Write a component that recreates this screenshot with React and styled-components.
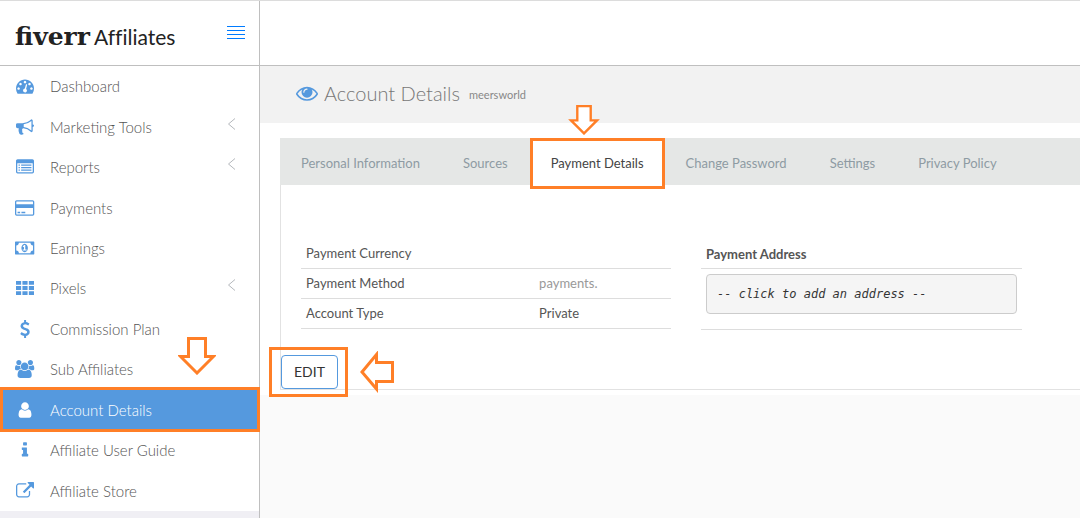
import styled, { createGlobalStyle } from "styled-components";

const icons = {
    dashboard: {
        width: 1792,
        path: "M384 1152q0-53-37.5-90.5t-90.5-37.5-90.5 37.5-37.5 90.5 37.5 90.5 90.5 37.5 90.5-37.5 37.5-90.5zm192-448q0-53-37.5-90.5t-90.5-37.5-90.5 37.5-37.5 90.5 37.5 90.5 90.5 37.5 90.5-37.5 37.5-90.5zm428 481l101-382q6-26-7.5-48.5t-38.5-29.5-48 6.5-30 39.5l-101 382q-60 5-107 43.5t-63 98.5q-20 77 20 146t117 89 146-20 89-117q16-60-6-117t-72-91zm660-33q0-53-37.5-90.5t-90.5-37.5-90.5 37.5-37.5 90.5 37.5 90.5 90.5 37.5 90.5-37.5 37.5-90.5zm-640-640q0-53-37.5-90.5t-90.5-37.5-90.5 37.5-37.5 90.5 37.5 90.5 90.5 37.5 90.5-37.5 37.5-90.5zm448 192q0-53-37.5-90.5t-90.5-37.5-90.5 37.5-37.5 90.5 37.5 90.5 90.5 37.5 90.5-37.5 37.5-90.5zm320 448q0 261-141 483-19 29-54 29h-1402q-35 0-54-29-141-221-141-483 0-182 71-348t191-286 286-191 348-71 348 71 286 191 191 286 71 348z",
    },
    bullhorn: {
        width: 1792,
        path: "M1664 640q53 0 90.5 37.5t37.5 90.5-37.5 90.5-90.5 37.5v384q0 52-38 90t-90 38q-417-347-812-380-58 19-91 66t-31 100.5 40 92.5q-20 33-23 65.5t6 58 33.5 55 48 50 61.5 50.5q-29 58-111.5 83t-168.5 11.5-132-55.5q-7-23-29.5-87.5t-32-94.5-23-89-15-101 3.5-98.5 22-110.5h-122q-66 0-113-47t-47-113v-192q0-66 47-113t113-47h480q435 0 896-384 52 0 90 38t38 90v384zm-128 604v-954q-394 302-768 343v270q377 42 768 341z",
    },
    list: {
        width: 1792,
        path: "M256 1152h128v128h-128zM256 896h128v128h-128zM256 640h128v128h-128zM512 1152h1024v128h-1024zM512 896h1024v128h-1024zM512 640h1024v128h-1024zM1664 1376v-832q0-13-9.5-22.5t-22.5-9.5h-1472q-13 0-22.5 9.5t-9.5 22.5v832q0 13 9.5 22.5t22.5 9.5h1472q13 0 22.5-9.5t9.5-22.5zm128-1088v1088q0 66-47 113t-113 47h-1472q-66 0-113-47t-47-113v-1088q0-66 47-113t113-47h1472q66 0 113 47t47 113z",
    },
    card: {
        width: 1920,
        path: "M1760 128q66 0 113 47t47 113v1216q0 66-47 113t-113 47h-1600q-66 0-113-47t-47-113v-1216q0-66 47-113t113-47h1600zm-1600 128q-13 0-22.5 9.5t-9.5 22.5v224h1664v-224q0-13-9.5-22.5t-22.5-9.5h-1600zm1600 1280q13 0 22.5-9.5t9.5-22.5v-608h-1664v608q0 13 9.5 22.5t22.5 9.5h1600zm-1504-128v-128h256v128h-256zm384 0v-128h384v128h-384z",
    },
    money: {
        width: 1920,
        path: "M768 1152h384v-96h-128v-448h-114l-148 137 77 80q42-37 55-57h2v288h-128v96zm512-256q0 70-21 142t-59.5 134-101.5 101-138 39-138-39-101.5-101-59.5-134-21-142 21-142 59.5-134 101.5-101 138-39 138 39 101.5 101 59.5 134 21 142zm512 256v-512q-106 0-181-75t-75-181h-1152q0 106-75 181t-181 75v512q106 0 181 75t75 181h1152q0-106 75-181t181-75zm128-832v1152q0 26-19 45t-45 19h-1792q-26 0-45-19t-19-45v-1152q0-26 19-45t45-19h1792q26 0 45 19t19 45z",
    },
    grid: {
        width: 1792,
        path: "M0 192h512v384h-512zM640 192h512v384h-512zM1280 192h512v384h-512zM0 704h512v384h-512zM640 704h512v384h-512zM1280 704h512v384h-512zM0 1216h512v384h-512zM640 1216h512v384h-512zM1280 1216h512v384h-512z",
    },
    dollar: {
        width: 1792,
        path: "M1362 1185q0 153-99.5 263.5t-258.5 136.5v175q0 14-9 23t-23 9h-135q-13 0-22.5-9.5t-9.5-22.5v-175q-66-9-127.5-31t-101.5-44.5-74-48-46.5-37.5-17.5-18q-17-21-2-41l103-135q7-10 23-12 15-2 24 9l2 2q113 99 243 125 37 8 74 8 81 0 142.5-43t61.5-122q0-28-15-53t-33.5-42-58.5-37.5-66-32-80-32.5q-39-16-61.5-25t-61.5-26.5-62.5-31-56.5-35.5-53.5-42.5-43.5-49-35.5-58-21-66.5-8.5-78q0-138 98-242t255-134v-180q0-13 9.5-22.5t22.5-9.5h135q14 0 23 9t9 23v176q57 6 110.5 23t87 33.5 63.5 37.5 39 29 15 14q17 18 5 38l-81 146q-8 15-23 16-14 3-27-7-3-3-14.5-12t-39-26.5-58.5-32-74.5-26-85.5-11.5q-95 0-155 43t-60 111q0 26 8.5 48t29.5 41.5 39.5 33 56 31 60.5 27 70 27.5q53 20 81 31.5t76 35 75.5 42.5 62 50 53 63.5 31.5 76.5 13 94z",
    },
    users: {
        width: 1920,
        path: "M593 896q-162 5-265 128h-134q-82 0-138-40.5t-56-118.5q0-353 124-353 6 0 43.5 21t97.5 42.5 119 21.5q67 0 133-23-5 37-5 66 0 139 81 256zm1071 637q0 120-73 189.5t-194 69.5h-874q-121 0-194-69.5t-73-189.5q0-53 3.5-103.5t14-109 26.5-108.5 43-97.5 62-81 85.5-53.5 111.5-20q10 0 43 21.5t73 48 107 48 135 21.5 135-21.5 107-48 73-48 43-21.5q61 0 111.5 20t85.5 53.5 62 81 43 97.5 26.5 108.5 14 109 3.5 103.5zm-1024-1277q0 106-75 181t-181 75-181-75-75-181 75-181 181-75 181 75 75 181zm704 384q0 159-112.5 271.5t-271.5 112.5-271.5-112.5-112.5-271.5 112.5-271.5 271.5-112.5 271.5 112.5 112.5 271.5zm576 225q0 78-56 118.5t-138 40.5h-134q-103-123-265-128 81-117 81-256 0-29-5-66 66 23 133 23 59 0 119-21.5t97.5-42.5 43.5-21q124 0 124 353zm-128-609q0 106-75 181t-181 75-181-75-75-181 75-181 181-75 181 75 75 181z",
    },
    user: {
        width: 1792,
        path: "M1536 1399q0 109-62.5 187t-150.5 78h-854q-88 0-150.5-78t-62.5-187q0-85 8.5-160.5t31.5-152 58.5-131 94-89 134.5-34.5q131 128 313 128t313-128q76 0 134.5 34.5t94 89 58.5 131 31.5 152 8.5 160.5zm-256-887q0 159-112.5 271.5t-271.5 112.5-271.5-112.5-112.5-271.5 112.5-271.5 271.5-112.5 271.5 112.5 112.5 271.5z",
    },
    info: {
        width: 1792,
        path: "M1216 1344v128q0 26-19 45t-45 19h-512q-26 0-45-19t-19-45v-128q0-26 19-45t45-19h64v-384h-64q-26 0-45-19t-19-45v-128q0-26 19-45t45-19h384q26 0 45 19t19 45v576h64q26 0 45 19t19 45zm-128-1152v192q0 26-19 45t-45 19h-256q-26 0-45-19t-19-45v-192q0-26 19-45t45-19h256q26 0 45 19t19 45z",
    },
    external: {
        width: 1792,
        path: "M1408 928v320q0 119-84.5 203.5t-203.5 84.5h-832q-119 0-203.5-84.5t-84.5-203.5v-832q0-119 84.5-203.5t203.5-84.5h704q14 0 23 9t9 23v64q0 14-9 23t-23 9h-704q-66 0-113 47t-47 113v832q0 66 47 113t113 47h832q66 0 113-47t47-113v-320q0-14 9-23t23-9h64q14 0 23 9t9 23zm384-864v512q0 26-19 45t-45 19-45-19l-176-176-652 652q-10 10-23 10t-23-10l-114-114q-10-10-10-23t10-23l652-652-176-176q-19-19-19-45t19-45 45-19h512q26 0 45 19t19 45z",
    },
    eye: {
        width: 1792,
        path: "M1664 960q-152-236-381-353 61 104 61 225 0 185-131.5 316.5t-316.5 131.5-316.5-131.5-131.5-316.5q0-121 61-225-229 117-381 353 133 205 333.5 326.5t434.5 121.5 434.5-121.5 333.5-326.5zm-720-384q0-20-14-34t-34-14q-125 0-214.5 89.5t-89.5 214.5q0 20 14 34t34 14 34-14 14-34q0-86 61-147t147-61q20 0 34-14t14-34zm848 384q0 34-20 69-140 230-376.5 368.5t-499.5 138.5-499.5-139-376.5-368q-20-35-20-69t20-69q140-229 376.5-368t499.5-139 499.5 139 376.5 368q20 35 20 69z",
    },
};

const menu = [
    { label: "Dashboard", icon: "dashboard" },
    { label: "Marketing Tools", icon: "bullhorn", children: true },
    { label: "Reports", icon: "list", children: true },
    { label: "Payments", icon: "card" },
    { label: "Earnings", icon: "money" },
    { label: "Pixels", icon: "grid", children: true },
    { label: "Commission Plan", icon: "dollar" },
    { label: "Sub Affiliates", icon: "users" },
    { label: "Account Details", icon: "user", active: true },
    { label: "Affiliate User Guide", icon: "info" },
    { label: "Affiliate Store", icon: "external" },
];

const tabs = [
    "Personal Information",
    "Sources",
    "Payment Details",
    "Change Password",
    "Settings",
    "Privacy Policy",
];

function Icon({ name, size = 18 }) {
    const { width, path } = icons[name];

    return (
        <svg
            viewBox={`0 0 ${width} 1792`}
            width={(size * width) / 1792}
            height={size}
            fill="currentColor"
            aria-hidden="true"
        >
            <path d={path} />
        </svg>
    );
}

function DownArrow({ width, height }) {
    return (
        <svg width={width} height={height} viewBox="0 0 38 38" fill="#fff" stroke="#ff7f27" strokeWidth="3" aria-hidden="true">
            <path d="M10.5 1.5H27.5V19.5H35.5L19 36L2.5 19.5H10.5Z" />
        </svg>
    );
}

export default function App() {

    return (

        <>
            <GlobalStyle />
            <StyledPage>
                <StyledSidebar>
                    <StyledBrand>
                        <StyledLogo href="#">
                            <StyledLogoName>fiverr</StyledLogoName>
                            <span>Affiliates</span>
                        </StyledLogo>
                        <StyledMenuButton type="button" aria-label="Toggle menu">
                            <svg width="18" height="13" fill="#007bff" aria-hidden="true">
                                <path d="M0 0h18v1H0zM0 4h18v1H0zM0 8h18v1H0zM0 12h18v1H0z" />
                            </svg>
                        </StyledMenuButton>
                    </StyledBrand>
                    <StyledNav>
                        {menu.map((item) => (
                            <StyledNavLink key={item.label} href="#" $active={item.active}>
                                <StyledNavIcon $active={item.active}><Icon name={item.icon} /></StyledNavIcon>
                                <span>{item.label}</span>
                                {item.children && (
                                    <StyledChevron width="9" height="12" aria-hidden="true">
                                        <path d="M8 .5L1.5 6L8 11.5" />
                                    </StyledChevron>
                                )}
                                {item.active && (
                                    <StyledMenuArrow><DownArrow width={38} height={38} /></StyledMenuArrow>
                                )}
                            </StyledNavLink>
                        ))}
                    </StyledNav>
                </StyledSidebar>
                <StyledMain>
                    <StyledTopbar />
                    <StyledTitleBar>
                        <Icon name="eye" size={22} />
                        <h1>Account Details</h1>
                        <small>meersworld</small>
                    </StyledTitleBar>
                    <StyledContent>
                        <StyledTabs>
                            {tabs.map((tab) => (
                                <StyledTab key={tab} type="button" $active={tab === "Payment Details"}>
                                    {tab}
                                    {tab === "Payment Details" && (
                                        <StyledTabArrow><DownArrow width={32} height={30} /></StyledTabArrow>
                                    )}
                                </StyledTab>
                            ))}
                        </StyledTabs>
                        <StyledPanel>
                            <StyledColumns>
                                <StyledTable>
                                    <tbody>
                                        <tr><th scope="row">Payment Currency</th><td></td></tr>
                                        <tr><th scope="row">Payment Method</th><StyledMuted>payments.</StyledMuted></tr>
                                        <tr><th scope="row">Account Type</th><td>Private</td></tr>
                                    </tbody>
                                </StyledTable>
                                <StyledAddress>
                                    <h2>Payment Address</h2>
                                    <StyledAddressBody>
                                        <button type="button">-- click to add an address --</button>
                                    </StyledAddressBody>
                                </StyledAddress>
                            </StyledColumns>
                            <StyledActions>
                                <StyledEdit type="button">EDIT</StyledEdit>
                                <svg width="34" height="42" viewBox="0 0 34 42" fill="#fff" stroke="#ff7f27" strokeWidth="3" aria-hidden="true">
                                    <path d="M32.5 11.5H16.5V3.5L2 21L16.5 38V30.5H32.5Z" />
                                </svg>
                            </StyledActions>
                        </StyledPanel>
                    </StyledContent>
                </StyledMain>
            </StyledPage>
        </>

    )
}

const GlobalStyle = createGlobalStyle`

    * {
        box-sizing: border-box;
    }

    body {
        margin: 0;
        background-color: #fafafa;
        color: #555;
        font-family: Lato, sans-serif;
        font-size: 13px;
    }

    h1, h2 {
        margin: 0;
    }

    button {
        font-family: inherit;
        cursor: pointer;
    }

    svg {
        display: block;
        flex: none;
    }

`

const StyledPage = styled.div`

    display: flex;
    min-height: 100vh;
    border-top: 1px solid #dcdcdc;

`

const StyledSidebar = styled.aside`

    flex: none;
    width: 260px;
    border-right: 1px solid #bfbfbf;
    background-color: #f0eff4;

`

const StyledBrand = styled.div`

    display: flex;
    justify-content: space-between;
    align-items: center;
    height: 65px;
    padding: 0 14px 0 15px;
    border-bottom: 1px solid #bfbfbf;
    background-color: #fff;

`

const StyledLogo = styled.a`

    display: flex;
    align-items: baseline;
    gap: 4px;
    padding-top: 8px;
    color: #222;
    font-size: 21px;
    font-variant-ligatures: none;
    line-height: 28px;
    text-decoration: none;

`

const StyledLogoName = styled.span`

    font-family: "DejaVu Serif", serif;
    font-size: 25px;
    font-weight: 700;
    font-variant-ligatures: normal;

`

const StyledMenuButton = styled.button`

    padding: 0 0 2px;
    border: 0;
    background: none;

`

const StyledNav = styled.nav`

    display: grid;
    min-height: 445px;
    background-color: #fff;

`

const StyledNavLink = styled.a`

    position: relative;
    display: flex;
    align-items: center;
    gap: 15px;
    padding: 0 23px 0 15px;
    background-color: ${({ $active }) => ($active ? "#5599de" : "transparent")};
    color: ${({ $active }) => ($active ? "#fff" : "#555")};
    font-size: 15px;
    font-weight: 300;
    line-height: 20px;
    text-decoration: none;

    &::after {
        content: "";
        display: ${({ $active }) => ($active ? "block" : "none")};
        position: absolute;
        inset: -3px -1px -2px 0;
        border: 3px solid #ff7f27;
    }

`

const StyledNavIcon = styled.span`

    display: flex;
    justify-content: center;
    width: 20px;
    color: ${({ $active }) => ($active ? "#fff" : "#5599de")};

`

const StyledChevron = styled.svg`

    margin: 0 0 6px auto;
    fill: none;
    stroke: #b4b8bc;

`

const StyledMenuArrow = styled.span`

    position: absolute;
    top: -53px;
    left: 178px;

`

const StyledMain = styled.main`

    flex: 1;
    min-width: 0;

`

const StyledTopbar = styled.header`

    height: 65px;
    border-bottom: 1px solid #bfbfbf;
    background-color: #fff;

`

const StyledTitleBar = styled.div`

    display: flex;
    align-items: center;
    height: 57px;
    padding: 0 36px 4px;
    background-color: #f2f2f2;
    color: #5599de;

    h1 {
        margin: 0 9px 0 6px;
        color: #777;
        font-size: 20px;
        font-weight: 300;
        line-height: 24px;
    }

    small {
        padding-top: 4px;
        color: #888;
        font-size: 11px;
    }

`

const StyledContent = styled.section`

    padding: 15px 0 5px 20px;
    background-color: #fff;

`

const StyledTabs = styled.div`

    display: flex;
    height: 47px;
    background-color: #e5e7e6;

`

const StyledTab = styled.button`

    position: relative;
    height: ${({ $active }) => ($active ? "51px" : "47px")};
    padding: ${({ $active }) => ($active ? "0 18px 1px" : "2px 22px 0 21px")};
    border: ${({ $active }) => ($active ? "3px solid #ff7f27" : "0")};
    background-color: ${({ $active }) => ($active ? "#fff" : "transparent")};
    color: ${({ $active }) => ($active ? "#444" : "#8e9ba3")};
    font-size: 13px;
    white-space: nowrap;

`

const StyledTabArrow = styled.span`

    position: absolute;
    top: -36px;
    left: 35px;

`

const StyledPanel = styled.div`

    border-bottom: 1px solid #e2e2e2;
    border-left: 1px solid #e2e2e2;

`

const StyledColumns = styled.div`

    display: grid;
    grid-template-columns: 370fr 321fr;
    align-items: start;
    gap: 30px;
    padding: 54px 58px 25px 20px;

`

const StyledTable = styled.table`

    width: 100%;
    border-collapse: separate;
    border-spacing: 0;
    table-layout: fixed;
    line-height: 19px;

    th, td {
        height: 30px;
        padding: 5px;
        border-bottom: 1px solid #ddd;
        text-align: left;
        font-weight: 400;
    }

    th {
        width: 63%;
    }

`

const StyledMuted = styled.td`

    color: #999;

`

const StyledAddress = styled.div`

    h2 {
        height: 30px;
        padding: 6px 5px 4px;
        border-bottom: 1px solid #ddd;
        font-size: 13px;
        font-weight: 700;
        line-height: 19px;
    }

`

const StyledAddressBody = styled.div`

    padding: 5px 5px 15px;
    border-bottom: 1px solid #ddd;

    button {
        display: block;
        width: 100%;
        height: 40px;
        padding: 0 10px;
        border: 1px solid #ccc;
        border-radius: 4px;
        background-color: #f5f5f5;
        color: #333;
        font-family: "DejaVu Sans Mono", monospace;
        font-size: 12px;
        font-style: italic;
        text-align: left;
    }

`

const StyledActions = styled.div`

    display: flex;
    align-items: center;
    gap: 22px;
    height: 34px;

`

const StyledEdit = styled.button`

    position: relative;
    width: 57px;
    height: 34px;
    padding: 0 0 2px;
    border: 1px solid #5599de;
    border-radius: 4px;
    background-color: #fff;
    color: #333;
    font-size: 14px;

    &::after {
        content: "";
        position: absolute;
        inset: -9px -11px -9px -13px;
        border: 3px solid #ff7f27;
    }

`
